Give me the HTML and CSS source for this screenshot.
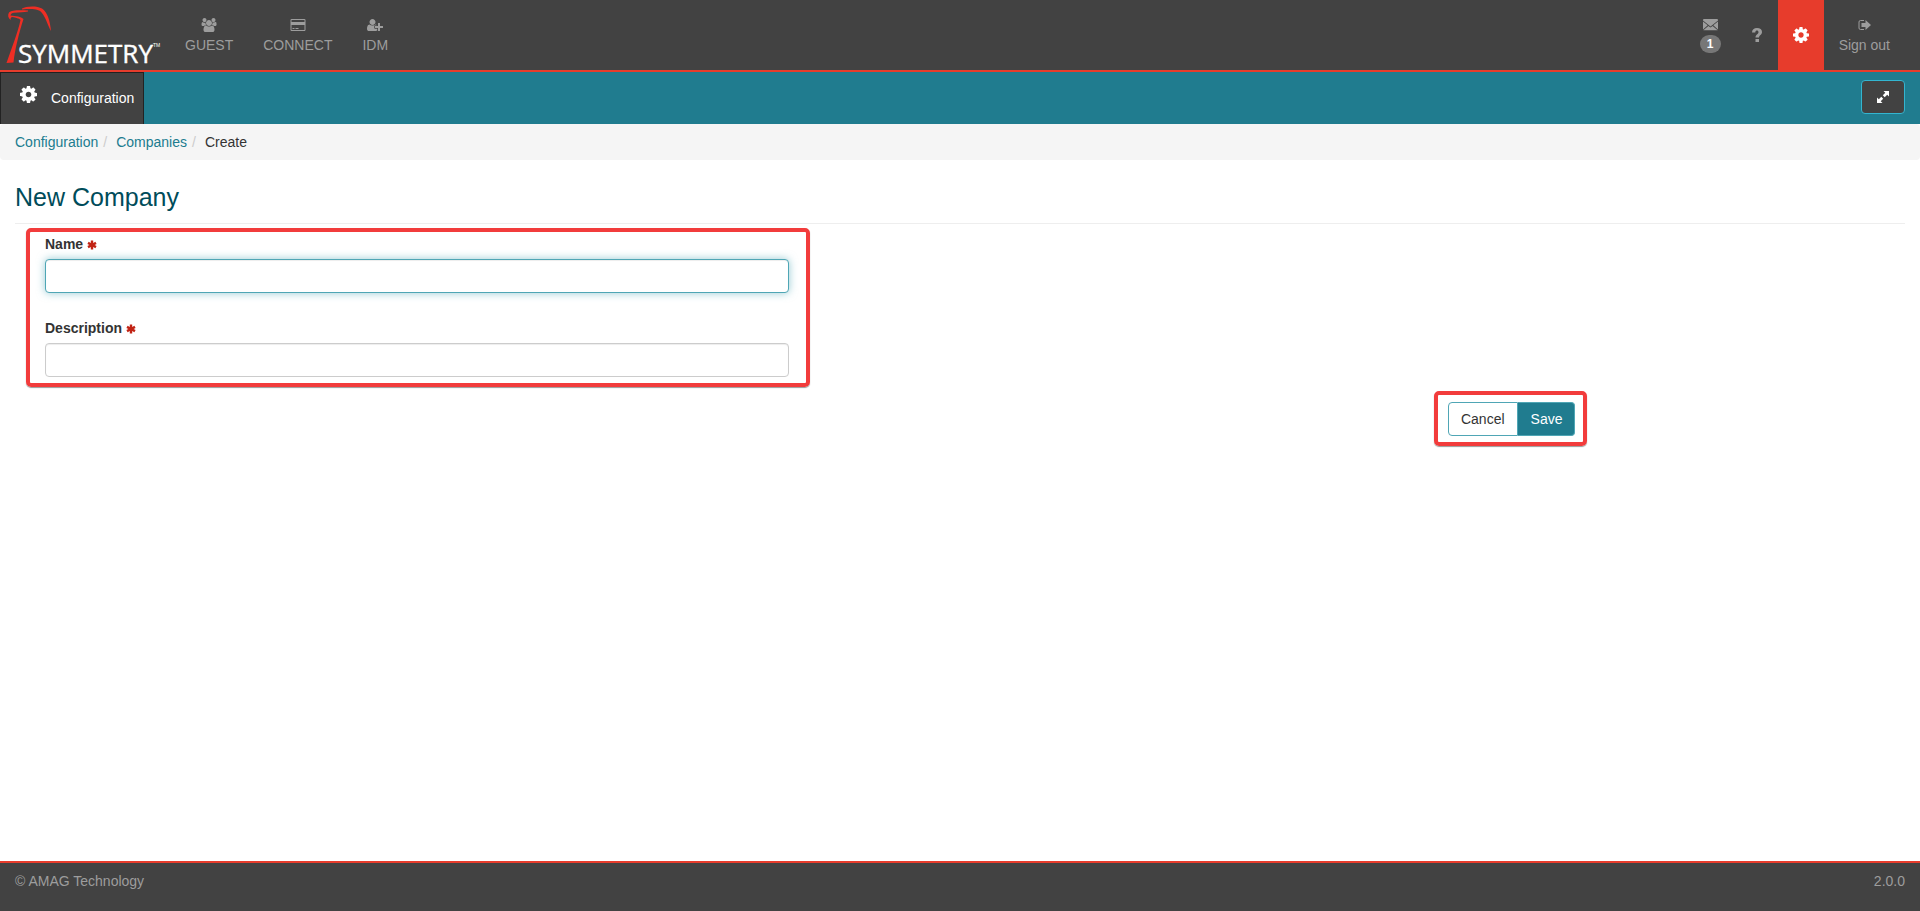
FILE: index.html
```html
<!DOCTYPE html>
<html lang="en">
<head>
    <meta charset="UTF-8">
    <title>New Company</title>
    <link rel="stylesheet" href="styles.css">
</head>
<body>
    <svg class="sprite" aria-hidden="true">
        <symbol id="cog" viewBox="128 128 1536 1536">
            <path d="M1152 896q0-106-75-181t-181-75-181 75-75 181 75 181 181 75 181-75 75-181zm512-109v222q0 12-8 23t-20 13l-185 28q-19 54-39 91 35 50 107 138 10 12 10 25t-9 23q-27 37-99 108t-94 71q-12 0-26-9l-138-108q-44 23-91 38-16 136-29 186-7 28-36 28h-222q-14 0-24.5-8.5t-11.5-21.5l-28-184q-49-16-90-37l-141 107q-10 9-25 9-14 0-25-11-126-114-165-168-7-10-7-23 0-12 8-23 15-21 51-66.5t54-70.5q-27-50-41-99l-183-27q-13-2-21-12.5t-8-23.5v-222q0-12 8-23t19-13l186-28q14-46 39-92-40-57-107-138-10-12-10-24 0-10 9-23 26-36 98.500-107.500t94.500-71.500q13 0 26 10l138 107q44-23 91-38 16-136 29-186 7-28 36-28h222q14 0 24.500 8.500t11.500 21.500l28 184q49 16 90 37l142-107q9-9 24-9 13 0 25 10 129 119 165 170 7 8 7 22 0 12-8 23-15 21-51 66.500t-54 70.500q26 50 41 98l183 28q13 2 21 12.500t8 23.500z"/>
        </symbol>
        <symbol id="asterisk" viewBox="0 0 10 10">
            <path d="M3.800 0.500h2.400v2.500l2.200-1.200 1.200 2.100-2 1.100 2 1.100-1.200 2.100-2.200-1.200v2.500h-2.400v-2.500l-2.200 1.200-1.200-2.100 2-1.100-2-1.100 1.200-2.100 2.200 1.200z"/>
        </symbol>
    </svg>

    <nav class="navbar">
        <a class="logo" href="#" aria-label="Symmetry">
            <svg width="170" height="70" viewBox="0 0 170 70">
                <path class="bird" d="M22 8.500C26 6 37 5.500 42 8.500C48 13 50 21 51 31C48 26 46 18 42 13C39 9 33 8.500 22 9.500z"/>
                <path class="bird" d="M28 10.500C20 10 11 10 9 12.500C7.500 15 8 18 10.500 20C10.500 18 11 17 12.500 17C16 18 19 18 20.500 20C18 32 11 50 6.500 63L13.500 62.500C15 49 19 33 23.500 19C21 16.500 16 16 10.500 15.500C11 13.500 12 13 14 12.800C19 12.300 24 12.300 28 11.500z"/>
                <text class="logo-text" x="18" y="63">SYMMETRY</text>
                <text class="logo-tm" x="153" y="47">TM</text>
            </svg>
        </a>
        <ul class="menu">
            <li><a href="#">
                <svg class="icon" width="16" height="14" viewBox="-64 0 1920 1792"><path d="M529 896q-162 5-265 128h-134q-82 0-138-40.500t-56-118.500q0-353 124-353 6 0 43.500 21t97.500 42.500 119 21.500q67 0 133-23-5 37-5 66 0 159 93 293zm1071 637q0 120-73 189.500t-194 69.500h-874q-121 0-194-69.500t-73-189.500q0-53 3.500-103.500t14-109 26.500-108.500 43-97.500 62-81 85.500-53.500 111.500-20q10 0 43 21.500t73 48 107 48 135 21.500 135-21.500 107-48 73-48 43-21.500q61 0 111.500 20t85.500 53.500 62 81 43 97.500 26.500 108.500 14 109 3.500 103.500zm-1024-1277q0 106-75 181t-181 75-181-75-75-181 75-181 181-75 181 75 75 181zm704 384q0 159-112.500 271.500t-271.500 112.500-271.500-112.500-112.500-271.500 112.500-271.500 271.500-112.500 271.500 112.500 112.500 271.500zm576 225q0 78-56 118.500t-138 40.500h-134q-103-123-265-128 93-134 93-293 0-29-5-66 66 23 133 23 59 0 119-21.500t97.500-42.500 43.500-21q124 0 124 353zm-128-609q0 106-75 181t-181 75-181-75-75-181 75-181 181-75 181 75 75 181z"/></svg>
                <span>GUEST</span>
            </a></li>
            <li><a href="#">
                <svg class="icon" width="16" height="14" viewBox="0 0 1920 1792"><path d="M1760 128q66 0 113 47t47 113v1216q0 66-47 113t-113 47h-1600q-66 0-113-47t-47-113v-1216q0-66 47-113t113-47h1600zm-1600 128q-13 0-22.500 9.500t-9.500 22.500v224h1664v-224q0-13-9.500-22.500t-22.500-9.500h-1600zm1600 1280q13 0 22.500-9.500t9.500-22.500v-608h-1664v608q0 13 9.500 22.500t22.500 9.500h1600zm-1504-128v-128h256v128h-256zm384 0v-128h384v128h-384z"/></svg>
                <span>CONNECT</span>
            </a></li>
            <li><a href="#">
                <svg class="icon" width="16" height="14" viewBox="0 0 2048 1792"><path d="M704 896q-159 0-271.500-112.500t-112.500-271.500 112.500-271.500 271.500-112.500 271.500 112.500 112.500 271.500-112.500 271.500-271.500 112.500zm960 128h352q13 0 22.500 9.500t9.500 22.500v192q0 13-9.500 22.500t-22.500 9.500h-352v352q0 13-9.500 22.500t-22.500 9.500h-192q-13 0-22.500-9.500t-9.500-22.500v-352h-352q-13 0-22.500-9.500t-9.500-22.500v-192q0-13 9.500-22.500t22.500-9.500h352v-352q0-13 9.500-22.500t22.500-9.500h192q13 0 22.500 9.500t9.500 22.500v352zm-736 224q0 52 38 90t90 38h256v238q-68 50-171 50h-874q-121 0-194-69t-73-190q0-53 3.500-103.500t14-109 26.500-108.500 43-97.500 62-81 85.500-53.500 111.500-20q19 0 39 17 79 61 154.500 91.500t164.500 30.500 164.500-30.500 154.500-91.500q20-17 39-17 132 0 217 96h-223q-52 0-90 38t-38 90v192z"/></svg>
                <span>IDM</span>
            </a></li>
        </ul>
        <ul class="menu menu-right">
            <li><a href="#" aria-label="Messages">
                <svg class="icon" width="15" height="14" viewBox="0 0 15 14"><path d="M0 2Q0 1 1 1H14Q15 1 15 2V2.500L7.500 8.500 0 2.500zM0 3.500L4.700 7.300 0 11.500zM15 3.500L10.300 7.300 15 11.500zM5.400 7.900L7.500 9.600 9.600 7.900 14.700 12.300H0.300z"/></svg>
                <span class="badge">1</span>
            </a></li>
            <li><a class="single" href="#" aria-label="Help">
                <svg class="icon" width="12" height="16" viewBox="0 0 12 16"><path d="M1 5.500C1 2.500 3 1 6 1C9 1 11 2.500 11 5C11 8 8 8.300 8 10.500H4.500C4.500 7.500 7.500 7 7.500 5.200C7.500 3 4.300 3 4.300 5.500zM4.500 12H8V15H4.500z"/></svg>
            </a></li>
            <li class="active"><a class="single" href="#" aria-label="Settings">
                <svg class="icon" width="16" height="16"><use href="#cog"/></svg>
            </a></li>
            <li><a href="#">
                <svg class="icon" width="13" height="14" viewBox="0 -1 13 14"><path class="line" d="M6 1.500H2.500Q1 1.500 1 3V9Q1 10.500 2.500 10.500H6"/><path d="M3.500 4H7.500V1L13 6 7.500 11V8H3.500z"/></svg>
                <span>Sign out</span>
            </a></li>
        </ul>
    </nav>

    <div class="toolbar">
        <a class="tab" href="#"><svg class="icon" width="17" height="17"><use href="#cog"/></svg><span>Configuration</span></a>
        <button class="btn-expand" type="button" aria-label="Full screen">
            <svg class="icon" width="14" height="14" viewBox="0 0 14 14"><path d="M7.500 1H13V6.500L11.200 4.700 8.700 7.200 6.800 5.300 9.300 2.800zM1 13V7.500L2.800 9.300 5.300 6.800 7.200 8.700 4.700 11.200 6.500 13z"/></svg>
        </button>
    </div>

    <ol class="breadcrumb">
        <li><a href="#">Configuration</a></li>
        <li><a href="#">Companies</a></li>
        <li>Create</li>
    </ol>

    <main class="content">
        <h1>New Company</h1>
        <form>
            <div class="fields">
                <div class="form-group">
                    <label for="name">Name <svg class="required" width="10" height="10"><use href="#asterisk"/></svg></label>
                    <input class="focused" type="text" id="name">
                </div>
                <div class="form-group">
                    <label for="description">Description <svg class="required" width="10" height="10"><use href="#asterisk"/></svg></label>
                    <input type="text" id="description">
                </div>
            </div>
            <div class="actions">
                <button class="btn btn-cancel" type="button">Cancel</button>
                <button class="btn btn-save" type="submit">Save</button>
            </div>
        </form>
    </main>

    <footer>
        <span>© AMAG Technology</span>
        <span>2.0.0</span>
    </footer>
</body>
</html>
```
FILE: styles.css
```css
* {
    box-sizing: border-box;
}
body {
    display: flex;
    flex-direction: column;
    min-height: 100vh;
    margin: 0;
    font-family: "Liberation Sans", Arial, sans-serif;
    font-size: 14px;
    line-height: 20px;
    color: #333;
    background-color: #fff;
}
a {
    color: #207c8f;
    text-decoration: none;
}
ul, ol {
    list-style: none;
    margin: 0;
    padding: 0;
}
.sprite {
    display: none;
}
.icon {
    display: block;
    fill: currentColor;
}
.line {
    fill: none;
    stroke: currentColor;
}

/* top navigation */
.navbar {
    display: flex;
    height: 72px;
    background-color: #424242;
    border-bottom: 2px solid #e73c2c;
}
.logo, .logo svg {
    display: block;
}
.bird {
    fill: #ee2e24;
}
.logo-text {
    font-family: "Open Sans", sans-serif;
    font-size: 26px;
    fill: #fff;
    stroke: #fff;
    stroke-width: 0.4px;
}
.logo-tm {
    font-size: 5px;
    fill: #fff;
}
.menu {
    display: flex;
}
.menu a {
    display: flex;
    flex-direction: column;
    align-items: center;
    gap: 3px;
    height: 70px;
    padding: 18px 15px 0;
    color: #9d9d9d;
}
.menu .single {
    justify-content: center;
    padding: 0 15px;
}
.menu-right {
    margin-left: auto;
    padding-right: 15px;
}
.menu .active a {
    background-color: #e73c2c;
    color: #fff;
}
.badge {
    min-width: 21px;
    padding: 3px 7px;
    border-radius: 10px;
    background-color: #777;
    color: #fff;
    font-size: 12px;
    font-weight: bold;
    line-height: 12px;
    text-align: center;
}

/* teal bar */
.toolbar {
    display: flex;
    justify-content: space-between;
    align-items: flex-start;
    height: 52px;
    padding-right: 15px;
    background-color: #207c8f;
}
.tab {
    display: flex;
    gap: 14px;
    height: 52px;
    padding: 13px 9px 0 19px;
    background-color: #424242;
    border: 1px solid #222;
    border-bottom: none;
    color: #fff;
}
.tab span {
    padding-top: 2px;
}
.btn-expand {
    display: flex;
    align-items: center;
    justify-content: center;
    width: 44px;
    height: 34px;
    margin-top: 8px;
    padding: 0;
    background-color: #424242;
    border: 1px solid #33b5d0;
    border-radius: 4px;
    color: #fff;
}

.breadcrumb {
    display: flex;
    padding: 8px 15px;
    background-color: #f5f5f5;
    border-radius: 4px;
}
.breadcrumb li + li::before {
    content: "/";
    padding: 0 9px 0 5px;
    color: #ccc;
}

/* page */
.content {
    flex: 1;
    padding: 0 15px;
}
h1 {
    margin: 20px 0 4px;
    padding-bottom: 9px;
    border-bottom: 1px solid #eee;
    color: #004c5a;
    font-size: 25px;
    font-weight: normal;
    line-height: 34px;
}
.fields {
    width: 41.5%;
    margin-left: 11px;
    padding: 2px 17px 6px 15px;
    border: 4px solid #f23c3c;
    border-radius: 5px;
    box-shadow: 0 1px 1px rgba(0, 0, 0, 0.4);
}
.form-group + .form-group {
    margin-top: 25px;
}
label {
    display: block;
    margin-bottom: 5px;
    font-weight: bold;
}
.required {
    vertical-align: -1px;
    fill: #c12314;
}
input {
    display: block;
    width: 100%;
    height: 34px;
    padding: 6px 12px;
    border: 1px solid #ccc;
    border-radius: 4px;
    box-shadow: inset 0 1px 1px rgba(0, 0, 0, 0.075);
    font: inherit;
}
.focused {
    border-color: #4fa6b5;
    box-shadow: inset 0 1px 1px rgba(0, 0, 0, 0.075), 0 0 8px rgba(79, 166, 181, 0.6);
}
.actions {
    display: flex;
    width: fit-content;
    margin: 4px 16.8% 0 auto;
    padding: 7px 8px 6px 10px;
    border: 4px solid #f23c3c;
    border-radius: 5px;
    box-shadow: 0 1px 1px rgba(0, 0, 0, 0.4);
}
.btn {
    height: 34px;
    padding: 0 12px;
    border: 1px solid #4fa6b5;
    font: inherit;
}
.btn-cancel {
    border-radius: 4px 0 0 4px;
    background-color: #fff;
    color: #333;
}
.btn-save {
    border-left-color: #207c8f;
    border-radius: 0 4px 4px 0;
    background-color: #207c8f;
    color: #fff;
}

footer {
    display: flex;
    justify-content: space-between;
    height: 50px;
    padding: 8px 15px;
    background-color: #424242;
    border-top: 2px solid #e73c2c;
    color: #9d9d9d;
}
```
